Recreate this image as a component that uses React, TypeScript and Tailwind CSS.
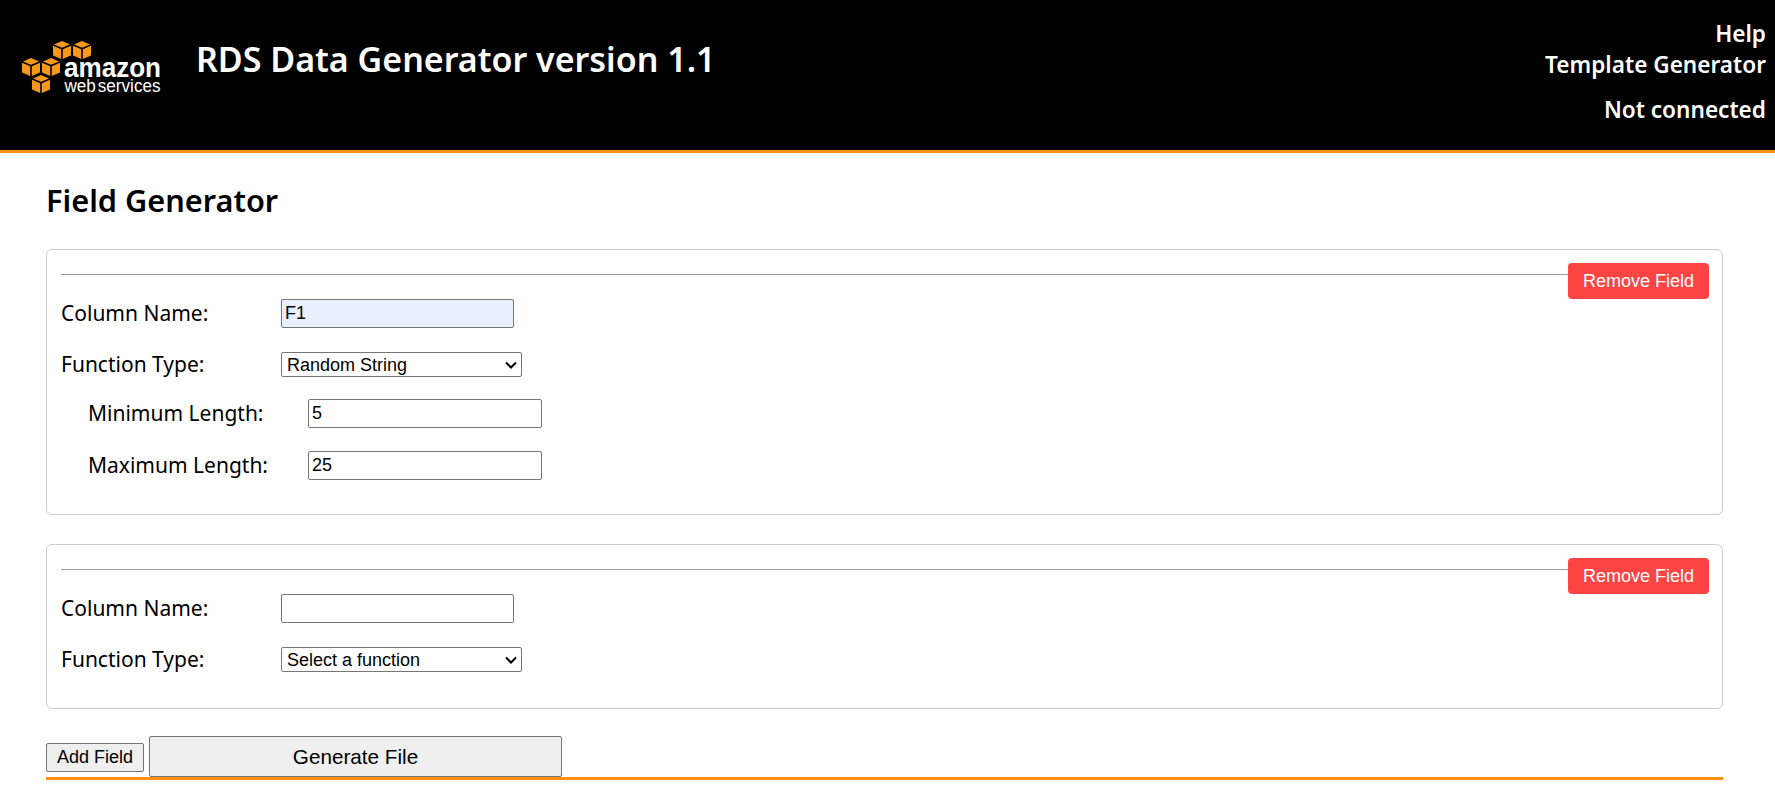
const labelFont = "font-['Noto_Sans',sans-serif]";

function Logo() {
  const cube = (x: number, y: number) => (
    <g key={`${x}-${y}`} transform={`translate(${x} ${y})`} fill="#f7981d">
      <path d="M1 3.5 L9 0 L17 3.5 L9 6.8 Z" />
      <path d="M0 4.8 L8.2 8.2 L8.2 18 L0 14.6 Z" />
      <path d="M18 4.8 L9.8 8.2 L9.8 18 L18 14.6 Z" />
    </g>
  );
  return (
    <svg width="142" height="60" viewBox="0 0 142 60" className="shrink-0 overflow-visible">
      {cube(32, 1)}
      {cube(52, 1)}
      {cube(1, 18)}
      {cube(21, 18)}
      {cube(11, 35)}
      <text x="43" y="36.7" fill="#fff" fontFamily="Liberation Sans, sans-serif" fontWeight="700" fontSize="28" textLength="97" lengthAdjust="spacingAndGlyphs">
        amazon
      </text>
      <text x="43.5" y="52" fill="#fff" fontFamily="Liberation Sans, sans-serif" fontSize="18" wordSpacing="-3" textLength="96" lengthAdjust="spacingAndGlyphs">
        web services
      </text>
    </svg>
  );
}

function Row({ label, indent, children }: { label: string; indent?: boolean; children: React.ReactNode }) {
  return (
    <div className={`flex items-center ${indent ? "ml-[27px]" : ""}`}>
      <label className={`w-[220px] shrink-0 text-[21px] leading-[25px] text-black ${labelFont}`}>{label}</label>
      {children}
    </div>
  );
}

function TextInput({ value, className = "" }: { value?: string; className?: string }) {
  return (
    <input
      type="text"
      defaultValue={value}
      className={`h-[29px] rounded-[2px] border border-[#767676] px-[3px] text-[18px] text-black font-['Liberation_Sans',sans-serif] ${className}`}
    />
  );
}

function FunctionSelect({ value, options }: { value: string; options: string[] }) {
  return (
    <div className="relative h-[25px] w-[241px]">
      <select
        defaultValue={value}
        className="h-full w-full appearance-none rounded-[2px] border border-[#767676] bg-white pt-[1px] pl-[5px] text-[18px] leading-[21px] text-black font-['Liberation_Sans',sans-serif]"
      >
        {options.map((option) => (
          <option key={option}>{option}</option>
        ))}
      </select>
      <svg width="12" height="8" viewBox="0 0 12 8" className="pointer-events-none absolute top-[9px] right-[5px]">
        <path d="M1 1.5 L6 6.5 L11 1.5" fill="none" stroke="#000" strokeWidth="2" />
      </svg>
    </div>
  );
}

function FieldCard({ children, className = "pb-[34px]" }: { children: React.ReactNode; className?: string }) {
  return (
    <div className={`rounded-[6px] border border-[#cccccc] pt-[13px] pr-[13px] pl-[14px] ${className}`}>
      <div className="flex items-start">
        <hr className="mt-[11px] flex-1 border-t border-[#999999]" />
        <button className="h-[36px] w-[141px] rounded-[4px] bg-[#ff4444] text-[18px] text-white font-['Liberation_Sans',sans-serif]">
          Remove Field
        </button>
      </div>
      <div className="flex flex-col">{children}</div>
    </div>
  );
}

export default function App() {
  return (
    <div className="min-h-[799px] bg-white">
      <header className={`flex h-[153px] items-start justify-between border-b-[3px] border-[#ff9011] bg-black pr-[9px] text-white ${labelFont}`}>
        <div className="flex items-start">
          <div className="ml-[21px] mt-[40px]">
            <Logo />
          </div>
          <h1 className="ml-[33px] mt-[32px] text-[34px] leading-[54px] font-semibold">RDS Data Generator version 1.1</h1>
        </div>
        <div className="mt-[19px] flex flex-col items-end text-[22.6px] font-semibold">
          <a className="leading-[29px]">Help</a>
          <a className="leading-[34px]">Template Generator</a>
          <span className="mt-[11px] leading-[34px]">Not connected</span>
        </div>
      </header>

      <main className="pr-[52px] pl-[46px]">
        <h2 className={`mt-[25px] mb-[27px] text-[30.7px] leading-[44px] font-semibold text-black ${labelFont}`}>Field Generator</h2>

        <FieldCard>
          <Row label="Column Name:">
            <TextInput value="F1" className="w-[233px] bg-[#e8f0fe]" />
          </Row>
          <div className="mt-[24px]">
            <Row label="Function Type:">
              <FunctionSelect value="Random String" options={["Select a function", "Random String"]} />
            </Row>
          </div>
          <div className="mt-[22px]">
            <Row label="Minimum Length:" indent>
              <TextInput value="5" className="w-[234px]" />
            </Row>
          </div>
          <div className="mt-[23px]">
            <Row label="Maximum Length:" indent>
              <TextInput value="25" className="w-[234px]" />
            </Row>
          </div>
        </FieldCard>

        <div className="mt-[29px]">
          <FieldCard className="pb-[36px]">
            <Row label="Column Name:">
              <TextInput className="w-[233px]" />
            </Row>
            <div className="mt-[24px]">
              <Row label="Function Type:">
                <FunctionSelect value="Select a function" options={["Select a function", "Random String"]} />
              </Row>
            </div>
          </FieldCard>
        </div>

        <div className="mt-[27px] flex items-end gap-[5px] border-b-[3px] border-[#ff9011] font-['Liberation_Sans',sans-serif] text-black">
          <button className="mb-[5px] h-[29px] w-[98px] rounded-[2px] border border-[#767676] bg-[#efefef] text-[18px]">Add Field</button>
          <button className="h-[41px] w-[413px] rounded-[2px] border border-[#767676] bg-[#efefef] text-[20.7px]">Generate File</button>
        </div>
      </main>
    </div>
  );
}
